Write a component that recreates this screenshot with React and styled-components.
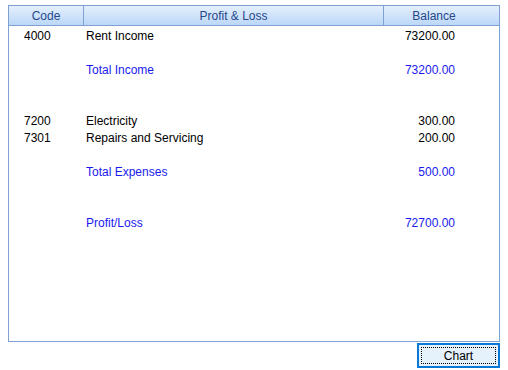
import React from 'react'
import styled, { createGlobalStyle } from 'styled-components'

const GlobalStyle = createGlobalStyle`
  body {
    margin: 0;
    background: #ffffff;
    font-family: 'Liberation Sans', Arial, sans-serif;
    font-size: 12px;
  }
`

const Page = styled.div`
  width: 508px;
  height: 370px;
  padding: 5px 8px 0 8px;
  box-sizing: border-box;
  display: flex;
  flex-direction: column;
`

const Panel = styled.div`
  height: 337px;
  box-sizing: border-box;
  border: 1px solid #7fa2d4;
  background: #ffffff;
  display: flex;
  flex-direction: column;
`

const HeaderRow = styled.div`
  display: grid;
  grid-template-columns: 75px 300px 100px 1fr;
  height: 20px;
  box-sizing: border-box;
  background: linear-gradient(#e4effc, #bcd7f8);
  border-bottom: 1px solid #7fa2d4;
`

const HeaderCell = styled.div`
  display: flex;
  align-items: center;
  justify-content: center;
  color: #24488a;
  border-right: ${p => (p.$divider ? '1px solid #7fa2d4' : 'none')};
`

const Body = styled.div`
  padding-top: 1px;
`

const Row = styled.div`
  display: grid;
  grid-template-columns: 75px 300px 100px 1fr;
  height: 17px;
  align-items: center;
  color: ${p => (p.$total ? '#1a1aee' : '#000000')};
`

const CodeCell = styled.div`
  padding-left: 15px;
`

const NameCell = styled.div`
  padding-left: 2px;
`

const AmountCell = styled.div`
  text-align: right;
  padding-right: 29px;
`

const Footer = styled.div`
  display: flex;
  justify-content: flex-end;
  padding-top: 1px;
`

const Button = styled.button`
  width: 83px;
  height: 25px;
  box-sizing: border-box;
  border: 2px solid #0a78d6;
  background: #e5f1fb;
  padding: 2px;
  font-family: 'Liberation Sans', Arial, sans-serif;
  font-size: 12px;
  color: #000000;
  display: flex;
`

const FocusBox = styled.span`
  flex: 1;
  border: 1px dotted #000000;
  display: flex;
  align-items: center;
  justify-content: center;
`

const rows = [
  { code: '4000', name: 'Rent Income', amount: '73200.00' },
  {},
  { name: 'Total Income', amount: '73200.00', total: true },
  {},
  {},
  { code: '7200', name: 'Electricity', amount: '300.00' },
  { code: '7301', name: 'Repairs and Servicing', amount: '200.00' },
  {},
  { name: 'Total Expenses', amount: '500.00', total: true },
  {},
  {},
  { name: 'Profit/Loss', amount: '72700.00', total: true },
]

const App = () => (
  <Page>
    <GlobalStyle />
    <Panel>
      <HeaderRow>
        <HeaderCell $divider>Code</HeaderCell>
        <HeaderCell $divider>Profit &amp; Loss</HeaderCell>
        <HeaderCell>Balance</HeaderCell>
        <HeaderCell />
      </HeaderRow>
      <Body>
        {rows.map((r, i) => (
          <Row key={i} $total={r.total}>
            <CodeCell>{r.code}</CodeCell>
            <NameCell>{r.name}</NameCell>
            <AmountCell>{r.amount}</AmountCell>
          </Row>
        ))}
      </Body>
    </Panel>
    <Footer>
      <Button>
        <FocusBox>Chart</FocusBox>
      </Button>
    </Footer>
  </Page>
)

export default App
